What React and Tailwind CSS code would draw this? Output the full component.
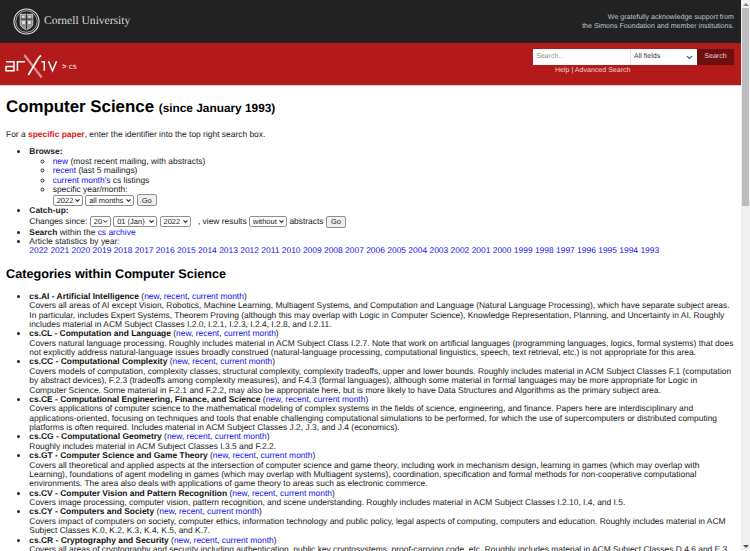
import { ChevronDown } from 'lucide-react'

const years = [2022, 2021, 2020, 2019, 2018, 2017, 2016, 2015, 2014, 2013, 2012, 2011, 2010, 2009, 2008, 2007, 2006, 2005, 2004, 2003, 2002, 2001, 2000, 1999, 1998, 1997, 1996, 1995, 1994, 1993]

const categories = [
  {
    name: 'cs.AI - Artificial Intelligence',
    text: 'Covers all areas of AI except Vision, Robotics, Machine Learning, Multiagent Systems, and Computation and Language (Natural Language Processing), which have separate subject areas. In particular, includes Expert Systems, Theorem Proving (although this may overlap with Logic in Computer Science), Knowledge Representation, Planning, and Uncertainty in AI. Roughly includes material in ACM Subject Classes I.2.0, I.2.1, I.2.3, I.2.4, I.2.8, and I.2.11.',
  },
  {
    name: 'cs.CL - Computation and Language',
    text: 'Covers natural language processing. Roughly includes material in ACM Subject Class I.2.7. Note that work on artificial languages (programming languages, logics, formal systems) that does not explicitly address natural-language issues broadly construed (natural-language processing, computational linguistics, speech, text retrieval, etc.) is not appropriate for this area.',
  },
  {
    name: 'cs.CC - Computational Complexity',
    text: 'Covers models of computation, complexity classes, structural complexity, complexity tradeoffs, upper and lower bounds. Roughly includes material in ACM Subject Classes F.1 (computation by abstract devices), F.2.3 (tradeoffs among complexity measures), and F.4.3 (formal languages), although some material in formal languages may be more appropriate for Logic in Computer Science. Some material in F.2.1 and F.2.2, may also be appropriate here, but is more likely to have Data Structures and Algorithms as the primary subject area.',
  },
  {
    name: 'cs.CE - Computational Engineering, Finance, and Science',
    text: 'Covers applications of computer science to the mathematical modeling of complex systems in the fields of science, engineering, and finance. Papers here are interdisciplinary and applications-oriented, focusing on techniques and tools that enable challenging computational simulations to be performed, for which the use of supercomputers or distributed computing platforms is often required. Includes material in ACM Subject Classes J.2, J.3, and J.4 (economics).',
  },
  {
    name: 'cs.CG - Computational Geometry',
    text: 'Roughly includes material in ACM Subject Classes I.3.5 and F.2.2.',
  },
  {
    name: 'cs.GT - Computer Science and Game Theory',
    text: 'Covers all theoretical and applied aspects at the intersection of computer science and game theory, including work in mechanism design, learning in games (which may overlap with Learning), foundations of agent modeling in games (which may overlap with Multiagent systems), coordination, specification and formal methods for non-cooperative computational environments. The area also deals with applications of game theory to areas such as electronic commerce.',
  },
  {
    name: 'cs.CV - Computer Vision and Pattern Recognition',
    text: 'Covers image processing, computer vision, pattern recognition, and scene understanding. Roughly includes material in ACM Subject Classes I.2.10, I.4, and I.5.',
  },
  {
    name: 'cs.CY - Computers and Society',
    text: 'Covers impact of computers on society, computer ethics, information technology and public policy, legal aspects of computing, computers and education. Roughly includes material in ACM Subject Classes K.0, K.2, K.3, K.4, K.5, and K.7.',
  },
  {
    name: 'cs.CR - Cryptography and Security',
    text: 'Covers all areas of cryptography and security including authentication, public key cryptosystems, proof-carrying code, etc. Roughly includes material in ACM Subject Classes D.4.6 and E.3.',
  },
]

function A({ children }) {
  return <a href="#" className="text-[#1111ee]">{children}</a>
}

// small native-looking select, page was shot zoomed out so real selects don't fit
function Sel({ value, className }) {
  return (
    <div className={`flex h-[11px] shrink-0 items-center justify-between rounded-[2px] border border-[#8f8f8f] bg-white pl-[3px] pr-[1px] text-[7.5px] leading-none text-[#222] ${className}`}>
      <span>{value}</span>
      <ChevronDown className="h-[7px] w-[7px] text-[#222]" strokeWidth={3.5} />
    </div>
  )
}

function GoBtn() {
  return (
    <button type="button" className="h-[12px] w-[20px] shrink-0 rounded-[2px] border border-[#8f8f8f] bg-[#efefef] text-[7.5px] leading-none text-[#222]">
      Go
    </button>
  )
}

function CornellLogo() {
  return (
    <svg width="27" height="27" viewBox="0 0 28 28" className="shrink-0" fill="none" stroke="#e8e8e8">
      <circle cx="14" cy="14" r="13" strokeWidth="1.1" />
      <circle cx="14" cy="14" r="11.2" strokeWidth="0.7" />
      <path d="M7.5 6.5h13v10c0 3-3.2 4.6-6.5 6.2-3.3-1.6-6.5-3.2-6.5-6.2z" fill="#8f8f8f" strokeWidth="0.8" />
      <path d="M7.5 11.5h13M14 6.5v16" strokeWidth="0.9" stroke="#2a2a2a" />
      <path d="M9.5 8h2.5v2h-2.5zM16 8h2.5v2h-2.5zM9.5 13.5h3v3h-3zM15.5 13.5h3v3h-3z" fill="#e0e0e0" stroke="none" />
    </svg>
  )
}

function ArxivLogo() {
  return (
    <svg width="55" height="25" viewBox="0 0 55 25" className="shrink-0" fill="none" stroke="#fff" strokeWidth="1.5">
      <path d="M1 7.7h8v9h-8v-4.2h8" />
      <path d="M12.4 16.7v-9h7.5" />
      <path d="M19.3 1l17.4 22.5" stroke="#e08f8f" strokeWidth="2.2" />
      <path d="M23.3 21l9.6-16c.8-1.4 1.6-2.4 3-3.5" strokeWidth="1.7" />
      <path d="M36.5 7.7h2.8v9" />
      <path d="M43.5 7.2l4 9.5 4-9.5" />
    </svg>
  )
}

export default function App() {
  return (
    <div className="flex h-[551px] overflow-hidden bg-white font-['Liberation_Sans',Arial,sans-serif] text-[8.44px] leading-[9.37px] text-[#222] [text-rendering:geometricPrecision]">
      <div className="min-w-0 flex-1">
        <header>
          <div className="flex h-[43px] items-center justify-between bg-[#222222] pl-[13px] pr-[7px]">
            <div className="flex items-center gap-[4px]">
              <CornellLogo />
              <span className="font-['Liberation_Serif',serif] text-[11.55px] leading-none text-[#d8d8d8]">Cornell University</span>
            </div>
            <p className="text-right text-[7.09px] leading-[8.4px] text-[#b9c6d6]">
              We gratefully acknowledge support from
              <br />
              the Simons Foundation and member institutions.
            </p>
          </div>
          <div className="flex h-[43px] items-start justify-between border-b border-[#cfcfcf] bg-[#b31b1b] pl-[5px] pr-[7px]">
            <div className="mt-[11px] flex items-center gap-[2px]">
              <ArxivLogo />
              <span className="text-[7.9px] text-[#f6dede]"><b>&gt;</b> cs</span>
            </div>
            <div className="mt-[6px] flex w-[201px] flex-col text-[7.05px]">
              <div className="flex h-[16px]">
                <div className="flex w-[97px] items-center bg-white pl-[3px] text-[#8a8a8a]">Search...</div>
                <div className="flex w-[67px] items-center justify-between border-l border-[#e0e0e0] bg-white pl-[3px] pr-[3px] text-[#333]">
                  All fields
                  <ChevronDown className="h-[9px] w-[9px] text-[#1f6fb2]" strokeWidth={3.5} />
                </div>
                <div className="flex flex-1 items-center justify-center rounded-r-[1px] bg-[#6b0f0f] text-[#f0d0d0]">Search</div>
              </div>
              <div className="mt-[1px] pl-[22px] leading-[10px] text-[#f2cfcf]">Help | Advanced Search</div>
            </div>
          </div>
        </header>

        <main className="pl-[6px] pr-[6px]">
          <h1 className="mt-[11px] text-[16.88px] leading-[20px] font-bold text-black">
            Computer Science <span className="text-[11.85px]">(since January 1993)</span>
          </h1>
          <p className="mt-[12px]">
            For a <span className="font-bold text-[#dd1111]">specific paper</span>, enter the identifier into the top right search box.
          </p>

          <ul className="mt-[8px] list-disc pl-[23.3px]">
            <li>
              <b>Browse:</b>
              <ul className="list-[circle] pl-[23.4px]">
                <li><A>new</A> (most recent mailing, with abstracts)</li>
                <li><A>recent</A> (last 5 mailings)</li>
                <li><A>current month's</A> cs listings</li>
                <li>
                  specific year/month:
                  <div className="flex h-[12px] items-center gap-[2.5px]">
                    <Sel value="2022" className="w-[30px]" />
                    <Sel value="all months" className="w-[49px]" />
                    <GoBtn />
                  </div>
                </li>
              </ul>
            </li>
            <li>
              <b>Catch-up:</b>
              <div className="flex h-[12px] items-center gap-[2.4px]">
                Changes since:
                <Sel value="20" className="w-[21px]" />
                <Sel value="01 (Jan)" className="w-[44px]" />
                <Sel value="2022" className="w-[31px]" />
                <span className="ml-[5px]">, view results</span>
                <Sel value="without" className="w-[38px]" />
                abstracts
                <GoBtn />
              </div>
            </li>
            <li><b>Search</b> within the <A>cs archive</A></li>
            <li>
              Article statistics by year:
              <br />
              {years.map((y) => (
                <span key={y}><A>{y}</A> </span>
              ))}
            </li>
          </ul>

          <h2 className="mt-[11px] text-[12.66px] leading-[14px] font-bold text-black">Categories within Computer Science</h2>

          <ul className="mt-[11px] list-disc pl-[23.3px]">
            {categories.map((c) => (
              <li key={c.name}>
                <b className="text-[#111]">{c.name}</b> (<A>new</A>, <A>recent</A>, <A>current month</A>)
                <br />
                {c.text}
              </li>
            ))}
          </ul>
        </main>
      </div>

      {/* scrollbar */}
      <div className="flex w-[9px] shrink-0 flex-col items-center bg-[#f0f0f0]">
        <div className="mt-[3px] h-0 w-0 border-x-[3px] border-b-[3px] border-x-transparent border-b-[#808080]" />
        <div className="mt-[2px] h-[198px] w-[7px] bg-[#bdbdbd]" />
        <div className="mt-auto mb-[3px] h-0 w-0 border-x-[3px] border-t-[3px] border-x-transparent border-t-[#505050]" />
      </div>
    </div>
  )
}
